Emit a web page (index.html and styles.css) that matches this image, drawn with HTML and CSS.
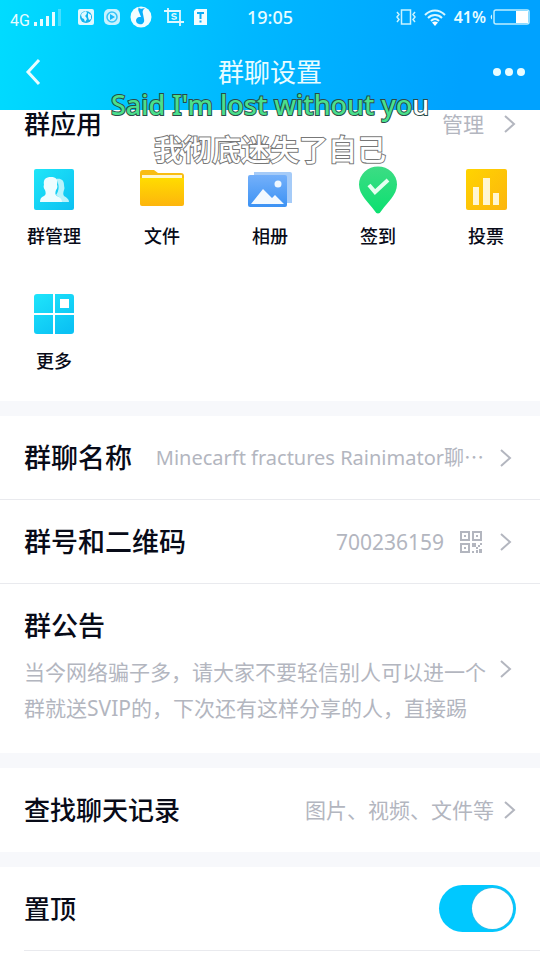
FILE: index.html
```html
<!DOCTYPE html>
<html lang="zh-CN">
<head>
<meta charset="utf-8">
<meta name="viewport" content="width=device-width, initial-scale=1">
<title>群聊设置</title>
<link rel="stylesheet" href="styles.css">
</head>
<body>
<svg class="defs" width="0" height="0" aria-hidden="true">
  <defs>
    <linearGradient id="cyan" x1="0" y1="0" x2="1" y2="1"><stop offset="0" stop-color="#1fe6f8"/><stop offset="1" stop-color="#0cc0f2"/></linearGradient>
    <linearGradient id="cyanAll" gradientUnits="userSpaceOnUse" x1="0" y1="0" x2="28" y2="42"><stop offset="0" stop-color="#1fe6fb"/><stop offset="1" stop-color="#0bc2f4"/></linearGradient>
    <linearGradient id="gold" x1="0" y1="0" x2="0" y2="1"><stop offset="0" stop-color="#ffdc00"/><stop offset="1" stop-color="#fdb50d"/></linearGradient>
    <linearGradient id="amber" x1="0" y1="0" x2="1" y2="1"><stop offset="0" stop-color="#ffd400"/><stop offset="1" stop-color="#fcb50f"/></linearGradient>
    <linearGradient id="blue" x1="0" y1="0" x2="0" y2="1"><stop offset="0" stop-color="#74b0fa"/><stop offset="1" stop-color="#3c92f4"/></linearGradient>
    <linearGradient id="green" x1="0" y1="0" x2="0" y2="1"><stop offset="0" stop-color="#3ddc84"/><stop offset="1" stop-color="#0be070"/></linearGradient>
  </defs>
</svg>
<header class="header">
  <div class="status">
    <div class="status-left">
      <span class="net">4G</span>
      <svg width="28" height="18" viewBox="0 0 28 18" fill="#e6fbff"><path d="M0 14h3v4H0zM6 11h3v7H6zM12 8h3v10h-3zM18 4h3v14h-3z"/><path d="M24 1h3v17h-3z" opacity=".3"/></svg>
      <svg class="s1" width="16" height="16" viewBox="0 0 16 16"><rect width="16" height="16" rx="2" fill="#dff8ff"/><circle cx="8" cy="8" r="6" fill="#12b4ef"/><path d="M4 4l4-2 1 2-1 2-1 1 1 1 1 2-2 3-1-3-2-1-1-3zM10 4l3 2v4l-2 1-1-3z" fill="#dff8ff"/></svg>
      <svg class="s2" width="16" height="16" viewBox="0 0 16 16"><rect width="16" height="16" rx="5" fill="#c9f3ff"/><circle cx="8" cy="8" r="5" fill="none" stroke="#36c4f8" stroke-width="1.500"/><path d="M6 5l5 3-5 3z" fill="#18b8f8"/></svg>
      <svg class="s3" width="22" height="22" viewBox="0 0 22 22"><circle cx="11" cy="11" r="10.500" fill="#f2fdff"/><path d="M9 1c0 2 2 2 6 1-2 2-3 3-2 6l1 5c1 4-2 6-5 5-4-1-4-6 0-7l2 0-2-5c-1-2-1-3 0-5z" fill="#06b0fb"/></svg>
      <svg class="s4" width="20" height="18" viewBox="0 0 20 18" fill="none" stroke="#dff8ff" stroke-width="1.800"><path d="M4 0v14h16M0 3h16v15"/><path d="M12.500 6.500c-1-1-4.500-1-4.500.8 0 1.800 4.500.6 4.500 2.400s-3.500 1.800-4.800.6" stroke-width="1.500"/></svg>
      <svg class="s5" width="13" height="16" viewBox="0 0 13 16"><path d="M0 2l2-2h11v16H0z" fill="#f2fdff"/><path d="M3 4h7M6.500 4v6M6.500 11.500v2" stroke="#0cabf5" stroke-width="2"/></svg>
    </div>
    <span class="time">19:05</span>
    <div class="status-right">
      <svg width="20" height="16" viewBox="0 0 20 16" fill="none" stroke="#c9f4ff" stroke-width="1.500"><rect x="5.500" y="1" width="9" height="14"/><path d="M1 3l2 2.500L1 8l2 2.500L1 13M19 3l-2 2.500L19 8l-2 2.500L19 13"/></svg>
      <svg width="22" height="17" viewBox="0 0 22 17" fill="none" stroke="#d8f7ff" stroke-width="2"><path d="M1 6c6-6 14-6 20 0M4 9c4-4 10-4 14 0M7 12c2.500-2.500 5.500-2.500 8 0"/><path d="M8 13.500c2-1.500 4-1.500 6 0L11 17z" fill="#fff" stroke="none"/></svg>
      <span class="pct">41%</span>
      <svg width="40" height="16" viewBox="0 0 40 16"><path d="M2 5.500a3 3 0 0 0 0 5z" fill="#d8f7ff"/><rect x="4" y="1" width="35" height="14" rx="2" fill="none" stroke="#bdeeff" stroke-width="1.500"/><path d="M26 2h12v12H26z" fill="#fff"/></svg>
    </div>
  </div>
  <div class="nav">
    <button class="icon-btn back" aria-label="返回"><svg width="16" height="28" viewBox="0 0 16 28"><path d="M14 2L3 14l11 12" fill="none" stroke="#e8fcff" stroke-width="3"/></svg></button>
    <h1>群聊设置</h1>
    <button class="icon-btn more" aria-label="更多选项"><svg width="32" height="8" viewBox="0 0 32 8" fill="#e8fcff"><circle cx="4" cy="4" r="4"/><circle cx="16" cy="4" r="4"/><circle cx="28" cy="4" r="4"/></svg></button>
  </div>
</header>
<div class="lyrics">
  <p class="line-en">Said I'm lost without yo<span>u</span></p>
  <p class="line-zh">我彻底迷失了自己</p>
</div>
<main>
  <section class="apps">
    <div class="apps-head">
      <h2>群应用</h2>
      <a class="value" href="#manage">管理<svg class="chev" width="12" height="18" viewBox="0 0 12 18"><path d="M1 1l9 8-9 8"/></svg></a>
    </div>
    <div class="grid">
      <a href="#admin"><svg width="42" height="42" viewBox="0 0 42 42"><rect x="1" y="1" width="40" height="41" rx="2" fill="url(#cyan)"/><path d="M23 11c5-1 8 1 8 6 0 2 1 3 0 5-1 3-1 4 0 6 3 2 5 3 5 6h-8c1-3-2-5-5-7 3-4 4-10 0-16z" fill="#b9f3fb"/><path d="M11 17c-1-6 2-8 7-8s7 2 6 8c1 1 0 4-1 5-1 3-1 5 1 6 3 1 5 3 5 6H7c0-3 1-5 4-6 2-1 2-3 1-6-1-1-2-4-1-5z" fill="#eefdff"/></svg><span>群管理</span></a>
      <a href="#files"><svg width="44" height="42" viewBox="0 0 44 42"><path d="M0 5q0-3 3-3h11l4 3h23q3 0 3 3v10H0z" fill="#f9bd12"/><path d="M2 7h40v8H2z" fill="#fff8d0"/><path d="M0 10h44v26q0 2-2 2H2q-2 0-2-2z" fill="url(#gold)"/></svg><span>文件</span></a>
      <a href="#album"><svg width="44" height="42" viewBox="0 0 44 42"><path d="M6 4h36q2 0 2 2v29H6z" fill="#a5cbf8"/><rect y="7" width="39" height="32" rx="2" fill="url(#blue)"/><circle cx="30" cy="16" r="3.500" fill="#eef7ff"/><path d="M3 36l12-15 9 9 3-3 9 9z" fill="#f3f9ff"/></svg><span>相册</span></a>
      <a href="#checkin"><svg class="pin" width="38" height="48" viewBox="0 0 38 48"><path d="M19 47.500Q17 47.500 15 44C10 37 0 29 0 18.500a19 18 0 0 1 38 0C38 29 28 37 23 44q-2 3.500-4 3.500z" fill="url(#green)"/><path d="M10 19l6 7L29 14" fill="none" stroke="#e5fff0" stroke-width="4"/></svg><span>签到</span></a>
      <a href="#vote"><svg width="42" height="42" viewBox="0 0 42 42"><rect x="1" y="1" width="41" height="41" rx="2" fill="url(#amber)"/><path d="M8 19h6v18H8zM18 10h7v27h-7zM28 25h6v12h-6z" fill="#fff6d2"/></svg><span>投票</span></a>
      <a href="#more"><svg width="42" height="42" viewBox="0 0 42 42"><g fill="url(#cyanAll)"><path d="M4 1h16v19H1V4q0-3 3-3zM22 1h16q3 0 3 3v16H22zM1 22h19v19H4q-3 0-3-3zM22 22h19v16q0 3-3 3H22z"/></g><path d="M27 6h9v9h-9z" fill="#fff"/></svg><span>更多</span></a>
    </div>
  </section>
  <section class="info">
    <a class="row" href="#name"><h2>群聊名称</h2><span class="value name">Minecarft fractures Rainimator聊⋯</span><svg class="chev" width="12" height="18" viewBox="0 0 12 18"><path d="M1 1l9 8-9 8"/></svg></a>
    <a class="row" href="#qr"><h2>群号和二维码</h2><span class="value">700236159</span>
      <svg class="qr" width="22" height="22" viewBox="0 0 22 22" fill="#b3b6bf"><path fill-rule="evenodd" d="M0 0h10v10H0zM2 2v6h6V2zM12 0h10v10H12zM14 2v6h6V2zM0 12h10v10H0zM2 14v6h6v-6z"/><path d="M4 4h2v2H4zM16 4h2v2h-2zM4 16h2v2H4zM12 12h4v4h-4zM18 14h2v-2h2v2h-2v2h-2v2h-2v-2h2zM12 20h2v2h-2zM16 19h2v3h-2zM19 18h3v4h-3z"/></svg>
      <svg class="chev" width="12" height="18" viewBox="0 0 12 18"><path d="M1 1l9 8-9 8"/></svg></a>
    <a class="notice" href="#notice"><h2>群公告</h2>
      <span class="notice-body"><span class="notice-text">当今网络骗子多，请大家不要轻信别人可以进一个群就送SVIP的，下次还有这样分享的人，直接踢</span><svg class="chev" width="12" height="18" viewBox="0 0 12 18"><path d="M1 1l9 8-9 8"/></svg></span></a>
  </section>
  <section>
    <a class="row search" href="#history"><h2>查找聊天记录</h2><span class="value">图片、视频、文件等</span><svg class="chev" width="12" height="18" viewBox="0 0 12 18"><path d="M1 1l9 8-9 8"/></svg></a>
  </section>
  <section>
    <div class="row pinned"><label for="top">置顶</label><input id="top" class="switch" type="checkbox" role="switch" checked></div>
  </section>
</main>
</body>
</html>
```
FILE: styles.css
```css
* { box-sizing: border-box; }
body {
  margin: 0;
  background: #fff;
  color: #080b18;
  font-family: "Noto Sans", "Noto Sans CJK SC", sans-serif;
  position: relative;
}
h1, h2, p { margin: 0; font-weight: 500; }
a { color: inherit; text-decoration: none; }
svg { display: block; flex: none; }
.defs { position: absolute; }

.header {
  height: 110px;
  background: linear-gradient(100deg, #00dcff 0%, #00b8ff 45%, #00a2ff 85%);
  color: #e8fcff;
}
.status {
  display: grid;
  grid-template-columns: 1fr auto 1fr;
  align-items: center;
  height: 34px;
  padding: 0 10px;
}
.status-left, .status-right { display: flex; align-items: center; }
.status-left { gap: 4px; }
.status-left .s1 { margin-left: 12px; }
.status-left .s2, .status-left .s3 { margin-left: 6px; }
.status-left .s4 { margin-left: 8px; }
.status-left .s5 { margin-left: 6px; }
.status-right { justify-content: flex-end; gap: 8px; }
.net { font: 16px/20px Roboto, sans-serif; padding-top: 8px; }
.time { font-size: 18px; font-weight: 500; }
.pct { font-size: 16px; font-weight: 600; margin-right: -4px; }
.nav {
  display: grid;
  grid-template-columns: 1fr auto 1fr;
  align-items: center;
  height: 76px;
  padding: 0 15px;
}
.nav h1 { font-size: 26px; line-height: 36px; font-weight: 400; }
.icon-btn { padding: 0; border: 0; background: none; justify-self: start; }
.back { padding-left: 10px; }
.more { justify-self: end; }

.lyrics {
  position: absolute;
  top: 88px;
  left: 0;
  right: 0;
  text-align: center;
  color: #fff;
  pointer-events: none;
  paint-order: stroke fill;
}
.line-en {
  font-size: 27px;
  line-height: 34px;
  color: #4be08c;
  -webkit-text-stroke: 2px #2a4a48;
}
.line-en span { color: #fff; }
.line-zh {
  margin-top: 10px;
  font-size: 29px;
  line-height: 36px;
  font-weight: 500;
  -webkit-text-stroke: 2px #777;
}

section + section { border-top: 15px solid #f7f8fb; }
h2, label { font-size: 26px; line-height: 36px; font-weight: 500; white-space: nowrap; }
.info h2 { font-size: 27px; }
.value, .notice-text { color: #b3b6bf; font-size: 21px; line-height: 36px; }
.chev { fill: none; stroke: #b3b6bf; stroke-width: 2; }

.apps { padding-bottom: 15px; }
.apps-head {
  display: flex;
  justify-content: space-between;
  align-items: center;
  height: 28px;
  padding: 0 24px;
}
.apps-head .value { display: flex; align-items: center; gap: 20px; }
.grid { display: grid; grid-template-columns: repeat(5, 1fr); padding-top: 30px; }
.grid a {
  display: flex;
  flex-direction: column;
  align-items: center;
  height: 125px;
  font-size: 18px;
  line-height: 26px;
  font-weight: 500;
}
.grid a:nth-child(n + 6) { height: 93px; }
.grid svg { margin-bottom: 13px; }
.grid .pin { margin: -2px 0 9px; }

.row {
  display: flex;
  align-items: center;
  height: 84px;
  padding: 0 28px 0 24px;
  border-bottom: 1px solid #e9eaee;
}
.row h2 { margin-right: auto; }
.row .chev { margin-left: 18px; }
.qr { margin-left: 16px; }
.row .name { font-size: 20px; white-space: nowrap; }
.row .name + .chev { margin-left: 16px; }
.notice { display: block; padding: 24px 28px 27px 24px; }
.notice h2 { margin-bottom: 10px; }
.notice-body { display: flex; align-items: flex-start; justify-content: space-between; }
.notice-text { flex: 1; max-width: 464px; }
.notice-body .chev { margin-top: 6px; }
.row.search { padding-right: 24px; border-bottom: 0; }
.row.search .chev { margin-left: 10px; }
.pinned { margin-left: 24px; padding-left: 0; padding-right: 24px; justify-content: space-between; }

.switch {
  appearance: none;
  display: flex;
  align-items: center;
  width: 77px;
  height: 47px;
  margin: 0;
  padding: 3px;
  border-radius: 24px;
  background: #c8ccd4;
}
.switch::before {
  content: "";
  width: 41px;
  height: 41px;
  border-radius: 50%;
  background: #fff;
  box-shadow: 0 0 2px #6fa8c4;
}
.switch:checked { justify-content: flex-end; background: #00c8ff; }
```
